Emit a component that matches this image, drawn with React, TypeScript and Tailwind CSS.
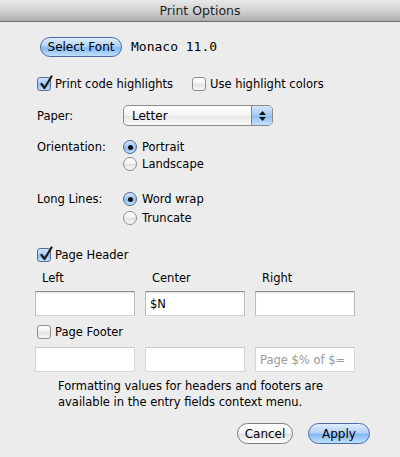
import React from "react";

// Aqua style fills
const blueGel =
  "border-[#4d6ba3] bg-[linear-gradient(to_bottom,#e0edfc_0%,#b3d2f6_45%,#86b8f0_55%,#bde0fd_100%)]";
const whiteGel =
  "border-[#7c7c7c] bg-[linear-gradient(to_bottom,#ffffff_0%,#f5f5f5_45%,#e3e3e3_55%,#fcfcfc_100%)]";

function Checkbox({ checked, label }: { checked?: boolean; label: string }) {
  return (
    <div className="flex items-center h-[14px]">
      <span
        className={`relative shrink-0 w-[14px] h-[14px] rounded-[3px] border ${
          checked
            ? "border-[#5b6d8f] bg-[linear-gradient(to_bottom,#d4e6fa_0%,#a3c8f1_50%,#8dbcef_51%,#c4e2fd_100%)]"
            : "border-[#8f8f8f] bg-[linear-gradient(to_bottom,#ffffff_0%,#f0f0f0_50%,#e2e2e2_51%,#f7f7f7_100%)]"
        }`}
      >
        {checked && (
          <svg className="absolute left-[1px] top-[-3px] overflow-visible" width="14" height="15" viewBox="0 0 14 15">
            <path d="M2.5 9 L5.5 13 L12.5 1.5" fill="none" stroke="#1a1a1a" strokeWidth="2.2" strokeLinecap="round" strokeLinejoin="round" />
          </svg>
        )}
      </span>
      <span className="ml-[4px] whitespace-nowrap">{label}</span>
    </div>
  );
}

function Radio({ checked, label }: { checked?: boolean; label: string }) {
  return (
    <div className="flex items-center h-[14px]">
      <span
        className={`shrink-0 w-[14px] h-[14px] rounded-full border flex items-center justify-center ${
          checked
            ? "border-[#50678f] bg-[linear-gradient(to_bottom,#d2e5fa_0%,#9fc6f1_50%,#88b9ef_51%,#c2e1fd_100%)]"
            : "border-[#8c8c8c] bg-[linear-gradient(to_bottom,#ffffff_0%,#f0f0f0_50%,#e0e0e0_51%,#f8f8f8_100%)]"
        }`}
      >
        {checked && <span className="w-[5px] h-[5px] rounded-full bg-[#111]" />}
      </span>
      <span className="ml-[5px] whitespace-nowrap">{label}</span>
    </div>
  );
}

function Field({ value, placeholder, disabled }: { value?: string; placeholder?: string; disabled?: boolean }) {
  return (
    <div
      className={`h-[25px] bg-white flex items-center pl-[4px] border ${
        disabled
          ? "border-[#d6d6d6] border-t-[#cacaca]"
          : "border-[#bdbdbd] border-t-[#8f8f8f] border-b-[#d2d2d2] shadow-[inset_0_1px_1px_rgba(0,0,0,0.12)]"
      }`}
    >
      {value && <span>{value}</span>}
      {placeholder && <span className="text-[#9a9a9a]">{placeholder}</span>}
    </div>
  );
}

export default function App() {
  return (
    <div className="w-[400px] h-[457px] overflow-hidden bg-[#ececec] text-black text-[11.5px] leading-4 font-['DejaVu_Sans',sans-serif] flex flex-col">
      {/* Title bar */}
      <div className="h-[22px] shrink-0 border-b border-[#6a6a6a] bg-[linear-gradient(to_bottom,#e8e8e8_0%,#d2d2d2_50%,#adadad_100%)] flex items-center justify-center text-[12.5px] text-[#1e1e1e]">
        Print Options
      </div>

      {/* Font */}
      <div className="mt-[15px] ml-[40px] flex items-center h-[20px]">
        <button className={`w-[82px] h-[20px] rounded-full border text-[12px] leading-none ${blueGel}`}>
          Select Font
        </button>
        <span className="ml-[9px] text-[13px] font-['DejaVu_Sans_Mono',monospace]">Monaco 11.0</span>
      </div>

      {/* Highlight options */}
      <div className="mt-[20px] ml-[37px] flex items-center">
        <div className="w-[155px]">
          <Checkbox checked label="Print code highlights" />
        </div>
        <Checkbox label="Use highlight colors" />
      </div>

      {/* Paper */}
      <div className="mt-[14px] ml-[37px] flex items-center h-[21px]">
        <span className="w-[86px]">Paper:</span>
        <div className="w-[150px] h-[21px] rounded-[5px] border border-[#8a8a8a] flex overflow-hidden bg-[linear-gradient(to_bottom,#ffffff_0%,#f3f3f3_50%,#e6e6e6_51%,#fafafa_100%)]">
          <span className="flex-1 pl-[8px] flex items-center text-[12px]">Letter</span>
          <span className="w-[21px] border-l border-[#6f86b0] flex flex-col items-center justify-center gap-[2px] bg-[linear-gradient(to_bottom,#d4e6fa_0%,#a4c9f2_50%,#8bbbef_51%,#c6e3fd_100%)]">
            <svg width="7" height="4" viewBox="0 0 7 4"><path d="M3.5 0 L7 4 L0 4 Z" fill="#111" /></svg>
            <svg width="7" height="4" viewBox="0 0 7 4"><path d="M0 0 L7 0 L3.5 4 Z" fill="#111" /></svg>
          </span>
        </div>
      </div>

      {/* Orientation */}
      <div className="mt-[14px] ml-[37px] flex items-start">
        <span className="w-[86px] h-[14px] flex items-center">Orientation:</span>
        <div className="flex flex-col gap-[3px]">
          <Radio checked label="Portrait" />
          <Radio label="Landscape" />
        </div>
      </div>

      {/* Long lines */}
      <div className="mt-[21px] ml-[37px] flex items-start">
        <span className="w-[86px] h-[14px] flex items-center">Long Lines:</span>
        <div className="flex flex-col gap-[5px]">
          <Radio checked label="Word wrap" />
          <Radio label="Truncate" />
        </div>
      </div>

      {/* Header */}
      <div className="mt-[23px] ml-[37px]">
        <Checkbox checked label="Page Header" />
      </div>
      <div className="mt-[8px] ml-[35px] grid grid-cols-[100px_100px_100px] gap-x-[10px]">
        <span className="pl-[7px]">Left</span>
        <span className="pl-[7px]">Center</span>
        <span className="pl-[7px]">Right</span>
      </div>
      <div className="mt-[5px] ml-[35px] grid grid-cols-[100px_100px_100px] gap-x-[10px]">
        <Field />
        <Field value="$N" />
        <Field />
      </div>

      {/* Footer */}
      <div className="mt-[9px] ml-[37px]">
        <Checkbox label="Page Footer" />
      </div>
      <div className="mt-[8px] ml-[35px] grid grid-cols-[100px_100px_100px] gap-x-[10px]">
        <Field disabled />
        <Field disabled />
        <Field disabled placeholder="Page $% of $=" />
      </div>

      <p className="mt-[6px] ml-[58px]">
        Formatting values for headers and footers are
        <br />
        available in the entry fields context menu.
      </p>

      {/* Buttons */}
      <div className="mt-[13px] flex justify-end pr-[30px] gap-[15px]">
        <button className={`w-[56px] h-[21px] rounded-full border text-[12px] leading-none ${whiteGel}`}>Cancel</button>
        <button className={`w-[62px] h-[21px] rounded-full border text-[12px] leading-none ${blueGel}`}>Apply</button>
      </div>
    </div>
  );
}
